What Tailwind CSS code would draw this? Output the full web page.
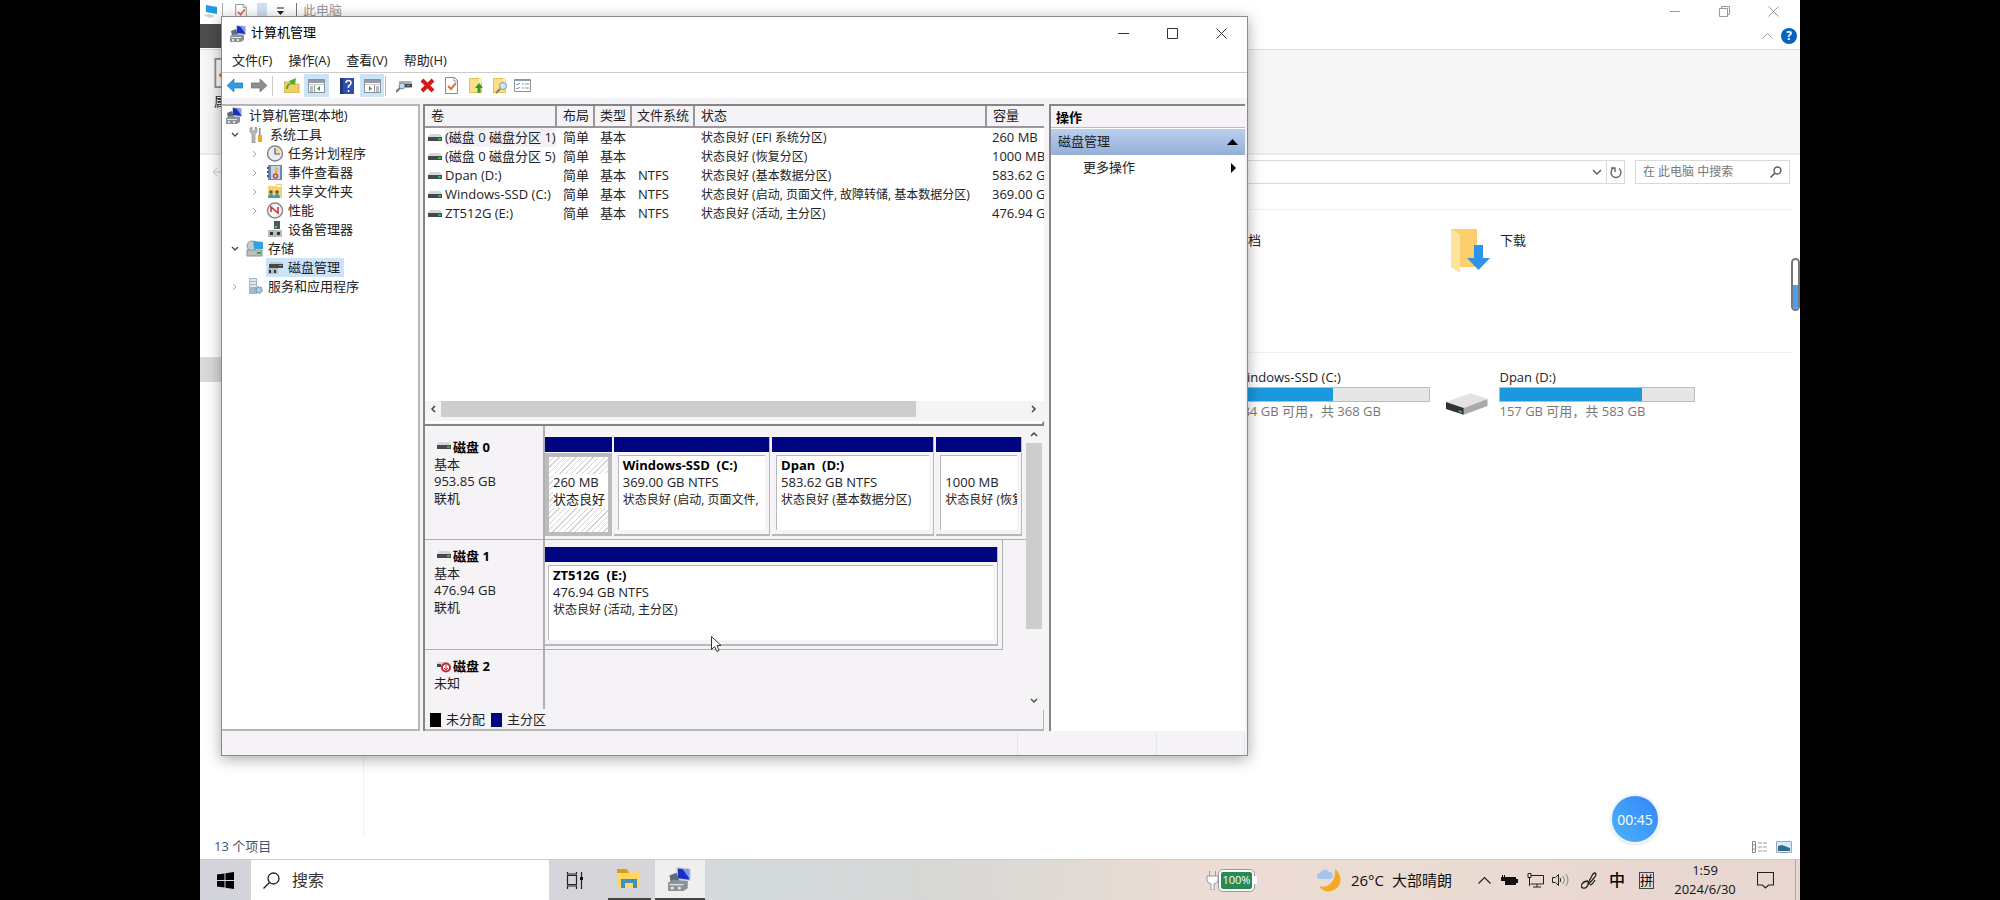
<!DOCTYPE html>
<html lang="zh-CN">

<head>
    <meta charset="UTF-8" />
    <meta name="viewport" content="width=device-width, initial-scale=1.0" />
    <script src="https://cdn.jsdelivr.net/npm/@tailwindcss/browser@4"></script>
    <title>计算机管理</title>
</head>

<body class="bg-black text-[#222] text-[13px] font-['Open_Sans','Noto_Sans_CJK_SC',sans-serif]">
    <!-- Shared icons -->
    <svg class="hidden">
        <symbol id="disk" viewBox="0 0 14 8">
            <path d="M2 0h10l2 3H0z" fill="#d5d7d9" />
            <path d="M0 3h14v4H0z" fill="#45494b" />
            <path d="M10 4h3v2h-3z" fill="#35b04a" />
        </symbol>
        <symbol id="computer" viewBox="0 0 17 17">
            <path d="M6 0l10 1v9l-10-1z" fill="#c9ccd6" />
            <path d="M7 1l8 1v7l-8-1z" fill="#1b2fc4" />
            <path d="M10 1l5 1v6z" fill="#7d9cf0" />
            <path d="M1 6l5-2 2 6-6 1z" fill="#5d6c80" />
            <path d="M0 11l4-2 10 1v5l-3 2H0z" fill="#8b9399" />
            <path d="M1 12h10v1H1zM2 14h2v2H2zM7 14h2v2H7z" fill="#dfe5e8" />
        </symbol>
        <symbol id="folder" viewBox="0 0 14 17">
            <path d="M0 1h13v15H0z" fill="#e3c254" />
            <path d="M1 2h11v13H1z" fill="#fbe08a" />
            <path d="M10 1h3v5h-3z" fill="#f6ebb8" />
        </symbol>
        <symbol id="chevron-right" viewBox="0 0 8 8">
            <path d="M2 1l3 3-3 3" fill="none" stroke="#a6a6a6" />
        </symbol>
        <symbol id="chevron-down" viewBox="0 0 8 8">
            <path d="M1 2l3 3 3-3" fill="none" stroke="#444" stroke-width="1.3" />
        </symbol>
        <symbol id="page-check" viewBox="0 0 13 17">
            <path d="M.5.5h9l3 3v13H.5z" fill="#fff" stroke="#8a8a8a" />
            <path d="M9 1v3h3" fill="none" stroke="#999" />
            <path d="M3 9l3 3 5-6" fill="none" stroke="#e2703a" stroke-width="2" />
        </symbol>
        <symbol id="pane" viewBox="0 0 17 14">
            <path d="M.5.5h16v13H.5z" fill="#fff" stroke="#8a929a" />
            <path d="M1 1h15v3H1z" fill="#939ca5" />
            <path d="M1 5h15v1H1z" fill="#c8cdd2" />
        </symbol>
    </svg>

    <div class="relative mx-auto flex h-screen w-4/5 flex-col overflow-hidden bg-white">

        <!-- File explorer -->
        <main class="flex flex-1 flex-col">
            <header class="flex h-[22px] items-center text-[#999]">
                <svg class="ml-[3px] h-[14px] w-[15px]" viewBox="0 0 15 14">
                    <path d="M3 1l11 2v7L3 8z" fill="#1f9de0" />
                    <path d="M0 11l6-1 6 2-5 2z" fill="#cdd3d8" />
                </svg>
                <span class="ml-1 h-4 w-px bg-[#aaa]"></span>
                <svg class="ml-3 h-[15px] w-[12px]"><use href="#page-check" /></svg>
                <span class="ml-[10px] h-4 w-[10px] bg-[#cfe0f3]"></span>
                <svg class="ml-[10px] h-2 w-[7px]" viewBox="0 0 7 8">
                    <path d="M0 1h7" stroke="#222" />
                    <path d="M0 4h7L3.500 8z" fill="#222" />
                </svg>
                <span class="mr-[6px] ml-3 h-4 w-px bg-[#777]"></span>
                <span>此电脑</span>
                <div class="ml-auto flex items-center gap-[38px] pr-[21px]">
                    <button aria-label="最小化"><svg class="h-[11px] w-[11px]" viewBox="0 0 11 11"><path d="M0 5.500h10" stroke="#999" /></svg></button>
                    <button aria-label="还原"><svg class="h-[11px] w-[11px]" viewBox="0 0 11 11"><path d="M.5 2.500h8v8h-8zM2.500 2.500v-2h8v8h-2" fill="none" stroke="#999" /></svg></button>
                    <button aria-label="关闭"><svg class="h-[11px] w-[11px]" viewBox="0 0 11 11"><path d="M.5.5l10 10M10.500.5l-10 10" stroke="#999" /></svg></button>
                </div>
            </header>
            <div class="flex h-[28px] items-center border-b border-[#dcdcdc]">
                <button class="h-6 w-[56px] bg-[#4d4d4d] pl-[11px] text-white">文件</button>
                <svg class="mr-2 ml-auto h-[6px] w-[11px]" viewBox="0 0 11 6"><path d="M.5 5.500l5-5 5 5" fill="none" stroke="#999" /></svg>
                <button class="mr-[3px] h-4 w-4 rounded-full bg-[#0563c1] text-[12px] leading-4 font-bold text-white">?</button>
            </div>
            <div class="h-[105px] border-b-2 border-[#ececec] bg-[#f6f6f6] pt-2 pl-[14px]">
                <div class="flex w-10 flex-col gap-1">
                    <svg class="h-[30px] w-6"><use href="#page-check" /></svg>
                    <span>属性</span>
                </div>
            </div>
            <div class="flex items-center pt-[5px] pr-[10px] pl-3">
                <svg class="h-3 w-3" viewBox="0 0 12 12"><path d="M12 6H1M5 2L1 6l4 4" fill="none" stroke="#ccc" /></svg>
                <div class="ml-[70px] flex h-6 flex-1 items-center justify-end border border-[#d9d9d9]">
                    <svg class="mr-1 h-[6px] w-[10px]" viewBox="0 0 10 6"><path d="M1 1l4 4 4-4" fill="none" stroke="#666" stroke-width="1.500" /></svg>
                    <button class="flex h-full w-[18px] items-center justify-center border-l border-[#d9d9d9]" aria-label="刷新">
                        <svg class="h-[13px] w-3" viewBox="0 0 12 13"><path d="M3 2.500a5 5 0 1 0 6 0M1 2h4v4" fill="none" stroke="#666" stroke-width="1.400" /></svg>
                    </button>
                </div>
                <div class="ml-[10px] flex h-6 w-[155px] items-center border border-[#d9d9d9] px-[7px]">
                    <input type="search" aria-label="搜索" placeholder="在 此电脑 中搜索" class="w-0 flex-1 text-[12px] outline-none placeholder:text-[#777]" />
                    <svg class="h-3 w-3" viewBox="0 0 12 12"><circle cx="7.500" cy="4.500" r="3.500" fill="none" stroke="#555" stroke-width="1.300" /><path d="M5 7L.5 11.500" stroke="#555" stroke-width="1.500" /></svg>
                </div>
            </div>
            <div class="flex flex-1">
                <nav class="w-[164px] border-r border-[#f2f2f2] pt-[173px]">
                    <div class="h-[25px] bg-[#d9d9d9]"></div>
                </nav>
                <div class="flex-1 pt-[25px] pr-2">
                    <section class="grid h-[143px] grid-cols-[repeat(4,265px)] justify-end border-t border-[#f0f0f0] pt-[18px] pr-[97px]">
                        <div class="col-start-3 flex pl-[17px]">
                            <svg class="h-[46px] w-[53px]" viewBox="0 0 53 46"><path d="M4 0h26v40H4z" fill="#fbd777" /></svg>
                            <span class="pt-[3px]">文档</span>
                        </div>
                        <div class="col-start-4 flex pl-4">
                            <svg class="h-[46px] w-[54px]" viewBox="0 0 54 46">
                                <path d="M5 1h26v38H5z" fill="#fbd06c" />
                                <path d="M5 1l9 5v39l-9-6z" fill="#fde49c" />
                                <path d="M28 17h9v13h7L32.500 42 21 30h7z" fill="#2e93ea" />
                            </svg>
                            <span class="pt-[3px]">下载</span>
                        </div>
                    </section>
                    <section class="grid grid-cols-[repeat(4,265px)] justify-end border-t border-[#f0f0f0] pt-4 pr-[97px]">
                        <div class="col-start-3 flex">
                            <div class="ml-[70px] w-[198px]">
                                <div class="h-[18px] leading-[16px]">Windows-SSD (C:)</div>
                                <div class="h-[15px] border border-[#bcbcbc] bg-[#e6e6e6]"><div class="h-full bg-[#1c98de]" style="width: 50%"></div></div>
                                <div class="text-[#777]">184 GB 可用，共 368 GB</div>
                            </div>
                        </div>
                        <div class="col-start-4 flex">
                            <svg class="mt-6 ml-4 h-[22px] w-[43px]" viewBox="0 0 43 22">
                                <path d="M0 9L25 0l17 6-24 9z" fill="#e3e1e4" />
                                <path d="M18 15l24-9v7l-24 9z" fill="#aaa9ad" />
                                <path d="M0 9l18 6v7L0 16z" fill="#303234" />
                                <path d="M13 17l3 1v2l-3-1z" fill="#38c64f" />
                            </svg>
                            <div class="ml-[11px] w-[198px]">
                                <div class="h-[18px] leading-[16px]">Dpan (D:)</div>
                                <div class="h-[15px] border border-[#bcbcbc] bg-[#e6e6e6]"><div class="h-full bg-[#1c98de]" style="width: 73%"></div></div>
                                <div class="text-[#777]">157 GB 可用，共 583 GB</div>
                            </div>
                        </div>
                    </section>
                </div>
            </div>
            <footer class="flex h-6 items-center justify-between pr-2 pl-[14px] text-[#44546a]">
                <span>13 个项目</span>
                <div class="flex items-center gap-2">
                    <svg class="h-3 w-4" viewBox="0 0 16 12"><path d="M.5.5h3v11h-3zM.5 4h3M.5 8h3" fill="none" stroke="#888" /><path d="M6 2h4M11 2h4M6 6h4M11 6h4M6 10h4M11 10h4" stroke="#999" /></svg>
                    <svg class="h-3 w-4" viewBox="0 0 16 12"><path d="M.5.5h15v11H.5z" fill="#d6ecf8" stroke="#9aaab5" /><path d="M2 5l4-1 8 3v3H2z" fill="#2c6c94" /></svg>
                </div>
            </footer>
        </main>

        <!-- Taskbar -->
        <footer class="flex h-[41px] border-t border-[#cfcfcf] bg-[linear-gradient(90deg,#d3d4db_0%,#d6d5da_28%,#d3dadd_33%,#d7d8d6_45%,#e0dad4_54%,#ecdcd5_62%,#eadbd3_75%,#e8d6d1_100%)]">
            <button class="flex w-[51px] items-center justify-center" aria-label="开始">
                <svg class="h-[17px] w-[17px]" viewBox="0 0 17 17"><path d="M0 2.500L7.500 1.500V8H0zM8.500 1.300L17 0v8H8.500zM0 9h7.500v6.500L0 14.500zM8.500 9H17v8l-8.500-1.300z" fill="#000" /></svg>
            </button>
            <div class="flex w-[298px] items-center gap-[12px] bg-white pl-3">
                <svg class="h-[17px] w-[17px]" viewBox="0 0 17 17"><circle cx="10.500" cy="6.500" r="5.500" fill="none" stroke="#222" stroke-width="1.300" /><path d="M6.500 10.500L.5 16.500" stroke="#222" stroke-width="1.400" /></svg>
                <input type="text" aria-label="搜索" placeholder="搜索" class="w-52 text-[16px] outline-none placeholder:text-[#333]" />
            </div>
            <button class="flex w-[52px] items-center justify-center" aria-label="任务视图">
                <svg class="h-[17px] w-[18px]" viewBox="0 0 18 17"><path d="M1.500 3.500h9v9h-9zM1.500 0v2h9V0M1.500 17v-3h9v3M15.500 0v17" fill="none" stroke="#222" stroke-width="1.200" /><path d="M14 5h3v3h-3z" fill="#111" /></svg>
            </button>
            <button class="ml-[7px] flex w-[43px] items-center justify-center border-b-2 border-[#444]" aria-label="文件资源管理器">
                <svg class="mr-px h-[20px] w-6" viewBox="0 0 24 20"><path d="M0 0h10l2 3h11v16H0z" fill="#ffd667" /><path d="M0 0h10l2 4H0z" fill="#e09a1a" /><path d="M4 19v-9h16v9h-4v-5H8v5z" fill="#3e93b8" /></svg>
            </button>
            <button class="ml-1 flex w-[50px] items-center justify-center border-b-2 border-[#444] bg-[#efeff0]" aria-label="计算机管理">
                <svg class="h-6 w-6"><use href="#computer" /></svg>
            </button>

            <div class="ml-auto flex items-center">
                <svg class="h-[19px] w-[13px]" viewBox="0 0 13 19"><path d="M3.500 0v5M9.500 0v5M1 5h11v4q0 3-4 4v6H5v-6q-4-1-4-4z" fill="#fff" stroke="#999" /></svg>
                <div class="flex h-[21px] w-[35px] items-center justify-center rounded-sm border-2 border-white bg-[#278a55] text-[11px] text-white outline outline-[#999]">100%</div>
                <span class="h-2 w-[3px] bg-white"></span>
                <svg class="ml-[60px] h-6 w-6" viewBox="0 0 24 24"><path d="M18 1c8 6 7 17-1 21-6 3-12 1-15-4 10 3 17-5 16-17z" fill="#f7a823" /><path d="M3 11a3 3 0 0 1 0-6 5 5 0 0 1 9-1 3.500 3.500 0 0 1 1 7z" fill="#a9c4ec" /></svg>
                <span class="ml-[10px] text-[15px] text-[#111]">26°C</span>
                <span class="ml-2 text-[15px] text-[#111]">大部晴朗</span>
                <svg class="ml-[26px] h-2 w-[13px]" viewBox="0 0 13 8"><path d="M.5 7.500l6-6 6 6" fill="none" stroke="#222" stroke-width="1.200" /></svg>
                <svg class="ml-[10px] h-[11px] w-[17px]" viewBox="0 0 17 11"><path d="M4 2h11v8H4zM15 4h2v4h-2zM0 2h5v4H0zM1 0h1v2H1zM3 0h1v2H3z" fill="#111" /></svg>
                <svg class="ml-[9px] h-[15px] w-[17px]" viewBox="0 0 17 15"><path d="M4 2.500h12.500v8.500h-13M1 .5h3v4H1zM2.500 5v8M10 11v3M6 14h8" fill="none" stroke="#222" /></svg>
                <svg class="ml-2 h-[14px] w-[17px]" viewBox="0 0 17 14"><path d="M.5 4.500h3l3-3v11l-3-3h-3zM8 5q1.500 2 0 4" fill="none" stroke="#222" /><path d="M11 3q3 4 0 8M14 1q4 6 0 12" fill="none" stroke="#888" /></svg>
                <svg class="ml-3 h-[17px] w-4" viewBox="0 0 16 17"><path d="M7 11L12 2q2-2 3 0 0 2-2 4l-6 7zM7 9Q3 9 1 12t1 4 5-3M9 13q2 0 5-5" fill="none" stroke="#222" stroke-width="1.300" /></svg>
                <span class="ml-3 text-[16px] font-medium text-black">中</span>
                <span class="ml-[14px] border border-[#444] text-[13px] leading-[15px] text-black">拼</span>
                <div class="ml-[18px] w-[66px] text-center leading-[19px] text-[#111]">
                    <div>1:59</div>
                    <div>2024/6/30</div>
                </div>
                <svg class="ml-[19px] h-[17px] w-[17px]" viewBox="0 0 17 17"><path d="M.5.5h16v12.500h-5l-3 3-3-3h-5z" fill="none" stroke="#222" stroke-width="1.100" /></svg>
                <span class="ml-[21px] h-10 w-[5px] border-l border-[#aaa]"></span>
            </div>
        </footer>

        <!-- Computer management window -->
        <div class="absolute top-[16px] left-[21px] flex h-[740px] w-[1027px] flex-col border border-[#8a8a8a] bg-[#f6f3f7] shadow-[0_3px_14px_rgba(0,0,0,0.35)]">
            <header class="flex h-8 items-center bg-white pl-2 text-black">
                <svg class="mr-1 h-[17px] w-[17px]"><use href="#computer" /></svg>
                计算机管理
                <div class="ml-auto flex items-center gap-[38px] pr-5">
                    <button aria-label="最小化"><svg class="h-[11px] w-[11px]" viewBox="0 0 11 11"><path d="M0 5.500h11" stroke="#333" /></svg></button>
                    <button aria-label="最大化"><svg class="h-[11px] w-[11px]" viewBox="0 0 11 11"><path d="M.5.5h10v10H.5z" fill="none" stroke="#333" /></svg></button>
                    <button aria-label="关闭"><svg class="h-[11px] w-[11px]" viewBox="0 0 11 11"><path d="M.5.5l10 10M10.500.5l-10 10" stroke="#333" /></svg></button>
                </div>
            </header>
            <nav class="flex h-6 items-center gap-[16px] border-b border-[#ccc] bg-white pl-[10px]">
                <button>文件(F)</button>
                <button>操作(A)</button>
                <button>查看(V)</button>
                <button>帮助(H)</button>
            </nav>
            <div class="flex h-[25px] items-center bg-white pl-[5px]">
                <button aria-label="后退"><svg class="h-[15px] w-4" viewBox="0 0 16 15"><path d="M0 7.500L7 1v4h9v5H7v4z" fill="#2f9be3" stroke="#217cc0" stroke-width=".7" /></svg></button>
                <button class="ml-2" aria-label="前进"><svg class="h-[15px] w-4" viewBox="0 0 16 15"><path d="M16 7.500L9 1v4H0v5h9v4z" fill="#8e8e8e" stroke="#6f6f6f" stroke-width=".7" /></svg></button>
                <span class="ml-[5px] h-5 w-px bg-[#ccc]"></span>
                <button class="ml-[11px]" aria-label="上移"><svg class="h-[15px] w-4" viewBox="0 0 16 15"><path d="M0 4h6l1 2h8v9H0z" fill="#f3cf6c" stroke="#c99b2c" stroke-width=".7" /><path d="M2 11q0-6 5-6L5 3l7-3-1 7-2-1q-5 0-5 5z" fill="#4cae32" /></svg></button>
                <button class="ml-1 flex h-[23px] w-[25px] items-center justify-center bg-[#cce4f7]" aria-label="控制台树"><svg class="h-[14px] w-[17px]" viewBox="0 0 17 14"><use href="#pane" /><path d="M6.500 6v7" stroke="#8a929a" /><path d="M2 8h3M2 10h3M2 12h3" stroke="#777" /><path d="M12 7v5L9 9.500z" fill="#3a9c34" /></svg></button>
                <button class="ml-[11px]" aria-label="帮助"><svg class="h-4 w-[14px]" viewBox="0 0 14 16"><path d="M0 0h14v16H0z" fill="#2f4fb0" /><path d="M0 0h3v16H0z" fill="#20367f" /><path d="M6 5q0-2.500 2.500-2.500T11 5q0 2-2.500 3v2M8.500 12v2" fill="none" stroke="#fff" stroke-width="1.500" /></svg></button>
                <button class="ml-[6px] flex h-[23px] w-6 items-center justify-center bg-[#cce4f7]" aria-label="操作窗格"><svg class="h-[14px] w-[17px]" viewBox="0 0 17 14"><use href="#pane" /><path d="M10.500 6v7" stroke="#8a929a" /><path d="M12 8h3M12 10h3M12 12h3" stroke="#777" /><path d="M5 7v5l3-2.500z" fill="#3a9c34" /></svg></button>
                <span class="ml-px h-5 w-px bg-[#bbb]"></span>
                <button class="ml-[10px]" aria-label="连接"><svg class="h-[14px] w-4" viewBox="0 0 16 14"><path d="M3 2h12l1 2v5H3z" fill="#aab3b8" /><path d="M4 5h12v3H4z" fill="#3c4649" /><path d="M11 6h3v1h-3z" fill="#3c6" /><circle cx="6" cy="7" r="3" fill="#b8dcf0" stroke="#789" /><path d="M4 9l-4 4" stroke="#678" stroke-width="2" /></svg></button>
                <button class="ml-2" aria-label="删除"><svg class="h-[15px] w-[15px]" viewBox="0 0 15 15"><path d="M2 2l11 11M13 2L2 13" stroke="#cf1b1b" stroke-width="4" /></svg></button>
                <button class="ml-[10px]" aria-label="属性"><svg class="h-[17px] w-[13px]"><use href="#page-check" /></svg></button>
                <button class="ml-[11px]" aria-label="打开"><svg class="h-[17px] w-[14px]" viewBox="0 0 14 17"><use href="#folder" /><path d="M10 6l4 5h-2.500v5h-3v-5H6z" fill="#2f9c2f" /></svg></button>
                <button class="ml-[10px]" aria-label="查找"><svg class="h-[17px] w-[15px]" viewBox="0 0 15 17"><use href="#folder" width="14" height="17" /><circle cx="10" cy="9" r="3.500" fill="#cfe6f5" stroke="#8797a0" /><path d="M7 12l-4 4" stroke="#8c7a55" stroke-width="2" /></svg></button>
                <button class="ml-[6px]" aria-label="列表"><svg class="h-[13px] w-[17px]" viewBox="0 0 17 13"><path d="M.5.5h16v12H.5z" fill="#fff" stroke="#8a929a" /><path d="M1 1h15v1H1z" fill="#939ca5" /><path d="M2.500 5l1 1 2-2M2.500 9l1 1 2-2" fill="none" stroke="#2b82d0" /><path d="M8 5h2M11 5h4M8 9h2M11 9h4" stroke="#8a929a" /></svg></button>
            </div>

            <div class="mt-[6px] flex flex-1">
                <!-- Console tree -->
                <aside class="w-[198px] border-2 border-l-0 border-[#b5b5b7] bg-white pl-1 leading-[19px]">
                    <ul>
                        <li class="flex items-center"><svg class="mr-[6px] h-[17px] w-[17px]"><use href="#computer" /></svg>计算机管理(本地)</li>
                        <li class="flex items-center pl-[5px]">
                            <svg class="mr-[10px] h-2 w-2"><use href="#chevron-down" /></svg>
                            <svg class="mr-[7px] h-4 w-[14px]" viewBox="0 0 14 16"><path d="M1 1v4l2 2v9h3V7l2-2V1L6 0v4H3V0z" fill="#b5babd" stroke="#7c8285" stroke-width=".6" /><path d="M10 1h1.500v7H10z" fill="#888" /><path d="M9 8h4v7H9z" fill="#f0a81c" /></svg>
                            系统工具
                        </li>
                        <li class="flex items-center pl-[25px]">
                            <svg class="mr-[7px] h-2 w-2"><use href="#chevron-right" /></svg>
                            <svg class="mr-1 h-[17px] w-[18px]" viewBox="0 0 18 17"><circle cx="9" cy="8.500" r="7.500" fill="#e9edf2" stroke="#83888c" stroke-width="1.500" /><path d="M9 8V2.500A6 6 0 0 1 14.500 8z" fill="#f5d69a" /><path d="M9 3v6h5" fill="none" stroke="#4a5a78" stroke-width="1.200" /></svg>
                            任务计划程序
                        </li>
                        <li class="flex items-center pl-[25px]">
                            <svg class="mr-[7px] h-2 w-2"><use href="#chevron-right" /></svg>
                            <svg class="mr-1 h-[17px] w-[18px]" viewBox="0 0 18 17"><path d="M2 1h14v15H2z" fill="#6d86b8" /><path d="M5 2h9v13H5z" fill="#c9d4e6" /><path d="M9 3l3 1-1 5H9z" fill="#e9b82f" /><circle cx="9.500" cy="12" r="2" fill="none" stroke="#cf4436" stroke-width="1.500" /><path d="M1 3h2v2H1zM1 7h2v2H1zM1 11h2v2H1z" fill="#556" /></svg>
                            事件查看器
                        </li>
                        <li class="flex items-center pl-[25px]">
                            <svg class="mr-[7px] h-2 w-2"><use href="#chevron-right" /></svg>
                            <svg class="mr-1 h-[17px] w-[18px]" viewBox="0 0 18 17"><path d="M2 3h8V1h6v14H2z" fill="#f3d272" /><path d="M11 2h4v2h-4z" fill="#fff5cf" /><path d="M2 15q0-4 3-4t3 4zM8 15q0-4 3-4t3 4z" fill="#3b9db0" /><circle cx="5" cy="9" r="1.800" fill="#6b5638" /><circle cx="11" cy="9" r="1.800" fill="#6b5638" /></svg>
                            共享文件夹
                        </li>
                        <li class="flex items-center pl-[25px]">
                            <svg class="mr-[7px] h-2 w-2"><use href="#chevron-right" /></svg>
                            <svg class="mr-1 h-[17px] w-[18px]" viewBox="0 0 18 17"><circle cx="9" cy="8.500" r="7.500" fill="#f4f4f4" stroke="#83888c" stroke-width="1.500" /><path d="M5 10V5l7 6V5" fill="none" stroke="#d1342b" stroke-width="1.600" /></svg>
                            性能
                        </li>
                        <li class="flex items-center pl-10">
                            <svg class="mr-1 h-[17px] w-[18px]" viewBox="0 0 18 17"><path d="M8 0h6v8H8z" fill="#50565a" /><path d="M9 5h2v2H9z" fill="#5c6" /><path d="M2 9h14v7H2z" fill="#b9bcbe" /><path d="M4 11h3v3H4zM11 11h3v3h-3z" fill="#333" /></svg>
                            设备管理器
                        </li>
                        <li class="flex items-center pl-[5px]">
                            <svg class="mr-[7px] h-2 w-2"><use href="#chevron-down" /></svg>
                            <svg class="mr-1 h-[17px] w-[18px]" viewBox="0 0 18 17"><circle cx="6" cy="6" r="5" fill="#c5cbd0" stroke="#8d9499" /><path d="M7 1l10 1v7H8z" fill="#2ea3dc" /><path d="M1 10h15v6H1z" fill="#b9bfc3" stroke="#878d91" /><path d="M11 12h4v2h-4z" fill="#35a045" /></svg>
                            存储
                        </li>
                        <li class="flex items-center pl-10">
                            <span class="flex items-center bg-[#cce4fb] pr-1"><svg class="mr-1 h-[17px] w-[18px]" viewBox="0 0 18 17"><path d="M4 3h12l1 3H3z" fill="#c3c7c9" /><path d="M3 5h14v4H3z" fill="#44494c" /><path d="M13 6h3v1h-3z" fill="#3c5" /><path d="M2 9h10v6H2z" fill="#babdc0" /><path d="M3 11h2v3H3zM8 11h2v3H8z" fill="#333" /></svg>磁盘管理</span>
                        </li>
                        <li class="flex items-center pl-[5px]">
                            <svg class="mr-[7px] h-2 w-2"><use href="#chevron-right" /></svg>
                            <svg class="mr-1 h-[17px] w-[18px]" viewBox="0 0 18 17"><path d="M3 0h8v16H3z" fill="#a8b6c2" /><path d="M4 2h6M4 5h6M4 8h6" stroke="#f3f6f8" stroke-width="1.400" /><circle cx="13" cy="12" r="3" fill="#a9cbe6" stroke="#6b95b8" stroke-width="1.500" stroke-dasharray="2 1" /></svg>
                            服务和应用程序
                        </li>
                    </ul>
                </aside>

                <!-- Volumes and disks -->
                <section class="ml-[3px] flex w-[621px] flex-col overflow-hidden border-t-2 border-l-2 border-[#858587]">
                    <div class="h-[295px] bg-white">
                        <table class="w-full table-fixed border-collapse text-left whitespace-nowrap">
                            <colgroup>
                                <col class="w-[131px]" />
                                <col class="w-[38px]" />
                                <col class="w-[37px]" />
                                <col class="w-[63px]" />
                                <col class="w-[292px]" />
                                <col />
                            </colgroup>
                            <thead class="bg-[#f6f3f7]">
                                <tr class="h-[21px] border-b-2 border-[#98989a]">
                                    <th class="border-r-2 border-[#98989a] pl-[6px] font-normal">卷</th>
                                    <th class="border-r-2 border-[#98989a] pl-[6px] font-normal">布局</th>
                                    <th class="border-r-2 border-[#98989a] pl-[5px] font-normal">类型</th>
                                    <th class="border-r-2 border-[#98989a] pl-[5px] font-normal">文件系统</th>
                                    <th class="border-r-2 border-[#98989a] pl-[6px] font-normal">状态</th>
                                    <th class="pl-[6px] font-normal">容量</th>
                                </tr>
                            </thead>
                            <tbody class="leading-[19px]">
                                <tr>
                                    <td class="pl-[3px]"><span class="flex items-center gap-[3px]"><svg class="h-2 w-[14px] shrink-0"><use href="#disk" /></svg><span class="bg-[#f3f1f4]">(磁盘 0 磁盘分区 1)</span></span></td>
                                    <td class="pl-[7px]">简单</td>
                                    <td class="pl-[6px]">基本</td>
                                    <td class="pl-[7px]"></td>
                                    <td class="pl-[7px] text-[12px]">状态良好 (EFI 系统分区)</td>
                                    <td class="overflow-hidden pl-[6px]">260 MB</td>
                                </tr>
                                <tr>
                                    <td class="pl-[3px]"><span class="flex items-center gap-[3px]"><svg class="h-2 w-[14px] shrink-0"><use href="#disk" /></svg>(磁盘 0 磁盘分区 5)</span></td>
                                    <td class="pl-[7px]">简单</td>
                                    <td class="pl-[6px]">基本</td>
                                    <td class="pl-[7px]"></td>
                                    <td class="pl-[7px] text-[12px]">状态良好 (恢复分区)</td>
                                    <td class="overflow-hidden pl-[6px]">1000 MB</td>
                                </tr>
                                <tr>
                                    <td class="pl-[3px]"><span class="flex items-center gap-[3px]"><svg class="h-2 w-[14px] shrink-0"><use href="#disk" /></svg>Dpan (D:)</span></td>
                                    <td class="pl-[7px]">简单</td>
                                    <td class="pl-[6px]">基本</td>
                                    <td class="pl-[7px]">NTFS</td>
                                    <td class="pl-[7px] text-[12px]">状态良好 (基本数据分区)</td>
                                    <td class="overflow-hidden pl-[6px]">583.62 GB</td>
                                </tr>
                                <tr>
                                    <td class="pl-[3px]"><span class="flex items-center gap-[3px]"><svg class="h-2 w-[14px] shrink-0"><use href="#disk" /></svg>Windows-SSD (C:)</span></td>
                                    <td class="pl-[7px]">简单</td>
                                    <td class="pl-[6px]">基本</td>
                                    <td class="pl-[7px]">NTFS</td>
                                    <td class="pl-[7px] text-[12px]">状态良好 (启动, 页面文件, 故障转储, 基本数据分区)</td>
                                    <td class="overflow-hidden pl-[6px]">369.00 GB</td>
                                </tr>
                                <tr>
                                    <td class="pl-[3px]"><span class="flex items-center gap-[3px]"><svg class="h-2 w-[14px] shrink-0"><use href="#disk" /></svg>ZT512G (E:)</span></td>
                                    <td class="pl-[7px]">简单</td>
                                    <td class="pl-[6px]">基本</td>
                                    <td class="pl-[7px]">NTFS</td>
                                    <td class="pl-[7px] text-[12px]">状态良好 (活动, 主分区)</td>
                                    <td class="overflow-hidden pl-[6px]">476.94 GB</td>
                                </tr>
                            </tbody>
                        </table>
                    </div>
                    <div class="flex h-[16px] items-center">
                        <svg class="mx-1 h-2 w-2" viewBox="0 0 8 8"><path d="M6 1L3 4l3 3" fill="none" stroke="#444" stroke-width="1.500" /></svg>
                        <div class="h-full w-[475px] bg-[#cdcdcd]"></div>
                        <svg class="mr-[6px] ml-auto h-2 w-2" viewBox="0 0 8 8"><path d="M2 1l3 3-3 3" fill="none" stroke="#444" stroke-width="1.500" /></svg>
                    </div>
                    <div class="mt-1 h-[5px] border-t-2 border-r-2 border-b-2 border-t-white border-r-[#858587] border-b-[#858587]"></div>

                    <div class="flex flex-1 leading-[17px]">
                        <div class="flex-1">
                            <!-- Disk 0 -->
                            <div class="flex h-[114px]">
                                <div class="w-[120px] border-r-2 border-b border-[#b0b0b2] pt-[13px] pl-[9px]">
                                    <div class="flex items-center font-bold text-black"><svg class="mr-[2px] mb-1 ml-[3px] h-2 w-[14px]"><use href="#disk" /></svg>磁盘 0</div>
                                    <div>基本</div>
                                    <div>953.85 GB</div>
                                    <div>联机</div>
                                </div>
                                <div class="flex-1 border-b border-[#b0b0b2] pt-[11px]">
                                    <div class="grid h-[99px] grid-cols-[67fr_157fr_163fr_86fr] gap-[2px] pr-1 whitespace-nowrap">
                                        <div class="flex min-w-0 flex-col">
                                            <div class="h-[15px] bg-[#00067f]"></div>
                                            <div class="mt-px flex-1 overflow-hidden border-4 border-[#bcbcbe] bg-[repeating-linear-gradient(135deg,#fff_0_3px,#d2d2d2_3px_4px)] pt-[17px] pl-1"><span class="block bg-white">260 MB</span><span class="block bg-white">状态良好</span></div>
                                        </div>
                                        <div class="flex min-w-0 flex-col border-r border-b-2 border-[#b8b8ba]">
                                            <div class="h-[15px] bg-[#00067f]"></div>
                                            <div class="mx-1 mt-[3px] mb-1 flex-1 overflow-hidden border-t border-l border-[#b8b8ba] bg-white pt-px pl-1">
                                                <div class="font-bold text-black">Windows-SSD&nbsp; (C:)</div>
                                                <div>369.00 GB NTFS</div>
                                                <div class="text-[12px]">状态良好 (启动, 页面文件,</div>
                                            </div>
                                        </div>
                                        <div class="flex min-w-0 flex-col border-r border-b-2 border-[#b8b8ba]">
                                            <div class="h-[15px] bg-[#00067f]"></div>
                                            <div class="mx-1 mt-[3px] mb-1 flex-1 overflow-hidden border-t border-l border-[#b8b8ba] bg-white pt-px pl-1">
                                                <div class="font-bold text-black">Dpan&nbsp; (D:)</div>
                                                <div>583.62 GB NTFS</div>
                                                <div class="text-[12px]">状态良好 (基本数据分区)</div>
                                            </div>
                                        </div>
                                        <div class="flex min-w-0 flex-col border-r border-b-2 border-[#b8b8ba]">
                                            <div class="h-[15px] bg-[#00067f]"></div>
                                            <div class="mx-1 mt-[3px] mb-1 flex-1 overflow-hidden border-t border-l border-[#b8b8ba] bg-white pt-[18px] pl-1">
                                                <div>1000 MB</div>
                                                <div class="text-[12px]">状态良好 (恢复分区)</div>
                                            </div>
                                        </div>
                                    </div>
                                </div>
                            </div>
                            <!-- Disk 1 -->
                            <div class="flex h-[110px]">
                                <div class="w-[120px] border-r-2 border-b border-[#b0b0b2] pt-2 pl-[9px]">
                                    <div class="flex items-center font-bold text-black"><svg class="mr-[2px] mb-1 ml-[3px] h-2 w-[14px]"><use href="#disk" /></svg>磁盘 1</div>
                                    <div>基本</div>
                                    <div>476.94 GB</div>
                                    <div>联机</div>
                                </div>
                                <div class="w-[458px] border-r border-b border-[#b0b0b2] pt-[7px] pr-1">
                                    <div class="flex h-[99px] flex-col border-r border-b-2 border-[#b8b8ba]">
                                        <div class="h-[15px] bg-[#00067f]"></div>
                                        <div class="mt-[3px] mr-1 mb-1 ml-[3px] flex-1 border-t border-l border-[#b8b8ba] bg-white pt-px pl-1">
                                            <div class="font-bold text-black">ZT512G&nbsp; (E:)</div>
                                            <div>476.94 GB NTFS</div>
                                            <div class="text-[12px]">状态良好 (活动, 主分区)</div>
                                        </div>
                                    </div>
                                </div>
                            </div>
                            <!-- Disk 2 -->
                            <div class="h-[59px] w-[120px] border-r-2 border-[#b0b0b2] pt-2 pl-[9px]">
                                <div class="flex items-center font-bold text-black"><svg class="mr-[2px] ml-[3px] h-3 w-[14px]" viewBox="0 0 14 12"><path d="M0 1h10v4H0z" fill="#cfd2d4" /><path d="M0 3h4v3H0z" fill="#444" /><circle cx="9" cy="6.500" r="4" fill="#fff" stroke="#c2262b" stroke-width="2" /><path d="M9 4v5M7 7l2 2 2-2" fill="none" stroke="#c2262b" /></svg>磁盘 2</div>
                                <div>未知</div>
                            </div>
                        </div>
                        <div class="flex w-[18px] flex-col items-center pr-[2px]">
                            <svg class="mt-1 mb-[5px] h-2 w-2" viewBox="0 0 8 8"><path d="M1 6l3-3 3 3" fill="none" stroke="#444" stroke-width="1.500" /></svg>
                            <div class="h-[186px] w-full bg-[#cdcdcd]"></div>
                            <svg class="mt-auto mb-[5px] h-2 w-2"><use href="#chevron-down" /></svg>
                        </div>
                    </div>
                    <div class="flex h-[21px] items-center border-r border-b-2 border-[#b5b5b7] pl-[5px]">
                        <span class="mr-[5px] h-[14px] w-[11px] bg-black"></span>未分配
                        <span class="mr-[5px] ml-[6px] h-[14px] w-[11px] bg-[#00067f]"></span>主分区
                    </div>
                </section>

                <!-- Actions -->
                <aside class="mr-[2px] ml-[5px] flex-1 border-t-2 border-l-2 border-[#858587] bg-white">
                    <h2 class="h-[22px] border-b border-[#bbb] bg-[#f6f3f7] pl-[5px] leading-[22px] font-bold text-black">操作</h2>
                    <button class="mt-px flex h-[26px] w-full items-center justify-between bg-linear-to-b from-[#b9cfee] to-[#94b0d8] pr-[7px] pl-[7px]">
                        磁盘管理
                        <svg class="h-[6px] w-[11px]" viewBox="0 0 11 6"><path d="M0 6l5.500-6L11 6z" fill="#000" /></svg>
                    </button>
                    <button class="flex h-[26px] w-full items-center justify-between pr-[9px] pl-8">
                        更多操作
                        <svg class="h-[10px] w-[5px]" viewBox="0 0 5 10"><path d="M0 0l5 5-5 5z" fill="#000" /></svg>
                    </button>
                </aside>
            </div>

            <footer class="flex h-[24px] justify-end pt-[2px]">
                <span class="w-[139px] border-l border-[#e6e6e8]"></span>
                <span class="mr-[2px] w-[89px] border-x border-[#e6e6e8]"></span>
            </footer>
        </div>

        <!-- Overlays: mouse pointer, recording timer, side handle -->
        <svg class="absolute top-[636px] left-[511px] h-[17px] w-[11px]" viewBox="0 0 11 17"><path d="M.5.5v13l3-3 2.500 5 2-1-2-5h4z" fill="#fff" stroke="#333" /></svg>
        <div class="absolute right-[140px] bottom-[56px] flex h-[50px] w-[50px] items-center justify-center rounded-full border-2 border-[#eef3fa] bg-linear-to-tr from-[#4db2fb] to-[#3485f7] text-[14px] text-white shadow-sm">00:45</div>
        <div class="absolute top-[258px] right-0 flex h-[53px] w-[9px] items-end rounded-full border-2 border-[#777] bg-white">
            <div class="h-1/2 w-full rounded-b-full bg-[#4a9cf5]"></div>
        </div>
    </div>
</body>

</html>
